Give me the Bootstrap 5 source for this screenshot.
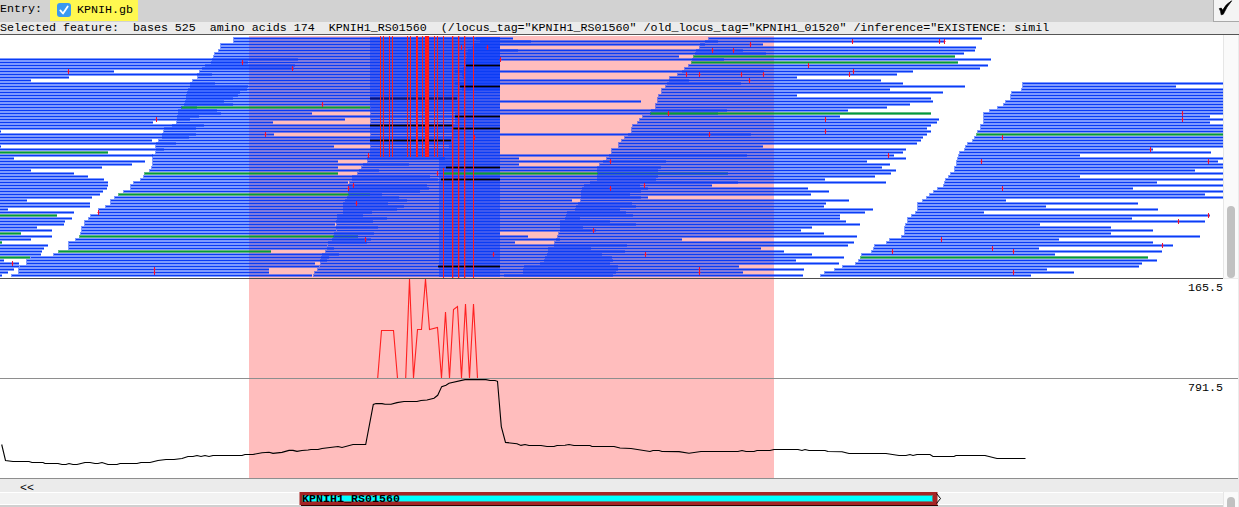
<!DOCTYPE html>
<html lang="en">
<head>
<meta charset="utf-8">
<meta name="viewport" content="width=device-width, initial-scale=1">
<title>KPNIH.gb</title>
<link rel="stylesheet" href="https://cdn.jsdelivr.net/npm/bootstrap@5.3.0/dist/css/bootstrap.min.css">
<style>
  body { font: 11.67px/12px "Liberation Mono", "Courier New", monospace; color: #000; background: #ebebeb; height: 507px; }
  svg { display: block; flex: none; }
  .entry-bar { height: 22px; background: #d2d2d2; }
  .entry-name { background: #fff850; width: 88px; height: 21px; padding-left: 7px; }
  .tick-box { width: 14px; height: 14px; border-radius: 3px; background: #3a99f0; margin-top: 3px; margin-right: 6px; }
  .apply-btn { width: 26px; height: 22px; background: #f4f4f4; border: 1px solid #a9a9a9; border-top: 0; border-right: 0; }
  .info-bar { height: 13px; background: #ebebeb; border-bottom: 1px solid #555; line-height: 12px; white-space: pre; }
  .stack-pane { height: 243px; background: #fff; }
  .plot-pane { width: 1238px; height: 100px; background: #fff; border-bottom: 1px solid #8e8e8e; }
  .selection { background-image: linear-gradient(90deg, transparent 249px, #ffbdbd 249px, #ffbdbd 774px, transparent 774px); }
  .scroll-track { width: 15px; background: #fafafa; border-left: 1px solid #e6e6e6; }
  .scroll-thumb { width: 8px; margin-left: 3px; background: #c1c1c1; border-radius: 4px; }
  .rule-row { height: 1px; width: 1223px; background: #4d4d4d; }
  .max-value { right: 15px; top: 3px; }
  .strand-bar { height: 13px; padding: 3px 0 0 20px; }
  .frame-line { height: 15px; width: 1223px; background: linear-gradient(#fff 1px, #f2f2f2 1px, #f2f2f2 12px, #fff 12px, #fff 13px, #d0d0d0 13px); }
</style>
</head>
<body class="overflow-hidden m-0">
<header class="entry-bar d-flex">
  <span style="width:50px;padding-top:3px">Entry:</span>
  <div class="entry-name d-flex">
    <span class="tick-box"><svg width="14" height="14"><path d="M3.3 7.4 6 10.5 10.7 3.4" fill="none" stroke="#fff" stroke-width="1.8" stroke-linecap="round" stroke-linejoin="round"/></svg></span><span style="padding-top:4px">KPNIH.gb</span>
  </div>
  <div class="apply-btn ms-auto"><svg width="25" height="21"><path d="M5.3 8.6Q7.7 6.9 8.6 10.2Q12.2 3.6 17.7 .8Q12.5 6.8 9.3 14.2L7.2 14.8Q6.9 11 5.3 8.6Z" fill="#000" stroke="#000" stroke-width=".7"/></svg></div>
</header>
<div class="info-bar overflow-hidden">Selected feature:  bases 525  amino acids 174  KPNIH1_RS01560  (/locus_tag="KPNIH1_RS01560" /old_locus_tag="KPNIH1_01520" /inference="EXISTENCE: simil</div>
<main>
  <section class="stack-pane d-flex" style="width:1238px">
    <svg id="reads" class="selection" width="1223" height="243" viewBox="0 35 1223 243" shape-rendering="crispEdges"></svg>
    <div class="scroll-track d-flex align-items-end"><div class="scroll-thumb" style="height:72px"></div></div>
  </section>
  <div class="rule-row"></div>
  <section class="plot-pane selection position-relative">
    <svg width="1223" height="99" viewBox="0 279 1223 99" fill="none" stroke="#ff2020" stroke-width="1.1">
      <polyline points="377.7,378 381.5,330.5 393.5,330.5 397.5,378"/>
      <polyline points="405.7,378 409.5,279 413.5,378 417.5,329.5 421.5,329.5 425.5,279 429.5,329.5 437.5,327.5 441.5,378 445.5,312 449.5,378 453.5,309.5 457.5,306.5 461.5,378 465.5,304 469.5,378 473.5,304 477.5,378"/>
    </svg>
    <span class="max-value position-absolute">165.5</span>
  </section>
  <section class="plot-pane selection position-relative">
    <svg width="1223" height="99" viewBox="0 379 1223 99" fill="none" stroke="#000" stroke-width="1.1">
      <polyline points="1.7,444.5 5.5,460.5 13,461.5 29,461.5 32,462.5 43,462.5 45,463.5 58,463.5 62,464.5 66,464.5 69,463.5 73,464.5 77,464.5 85,462.5 90,462.5 95,463.5 98,463.5 102,462.5 108,464.5 117,464.5 120,463.5 137,463.5 141,462.5 150,462.5 158,460.5 166,459.5 174,459.5 182,458.5 188,456.5 193,456.5 197,455.5 201,456.5 205,455.5 209,456.5 213,455.5 242,455.5 245,454.5 253,454.5 262,452.7 269,452.3 273,453.4 282,452.4 289,450.4 293,450.4 297,451.4 302,450.5 308,450 311,449.5 318,449.5 322,448.5 338,446.5 342,447.5 353,444.5 365.7,444.5 373.3,404.5 376,403.6 382,403.6 385,404.3 391,404.3 397,402.6 404,401.5 417,401.5 421,400.5 427,400 434,398.3 437.7,395.3 441.7,386.6 446,385.3 449,383.3 465,379.6 486,379.6 490,380.5 495,380.5 497.5,381.3 501.3,426.6 505.5,442.4 517,443.7 521,445.4 525,444.5 529,445.5 541,445.5 547,446.5 554,446.5 557,445.5 565,445.2 569,444.5 574,445.5 590,445.5 592,446.5 614,446.5 620,448 631,448.5 650,451.5 653,450.5 659,450.5 662,451.5 679,451.6 689,453.3 701,451.5 738,451.5 742,450.5 746,451.5 754,451.5 757,450.5 770,450.5 774,449.5 798,449.5 802,450.5 805,449.5 809,450.5 825,450.5 828,451.5 842,451.7 849,453.5 886,453.5 899,455.5 906,455.5 910,454.5 913,455.5 917,454.5 930,454.5 933,456.5 954,456.5 956,455.5 985,455.5 997,458.5 1025.5,458.5"/>
    </svg>
    <span class="max-value position-absolute">791.5</span>
  </section>
</main>
<div class="strand-bar">&lt;&lt;</div>
<footer class="d-flex overflow-hidden" style="height:15px">
  <div class="frame-line">
    <svg width="1223" height="15" viewBox="0 492 1223 15" font-family="Liberation Mono, monospace" font-size="11.67" font-weight="bold">
      <rect x="299.5" y="492" width="638" height="13" fill="#a52424"/>
      <rect x="302" y="495" width="631" height="7" fill="#5c8580"/>
      <rect x="303" y="496" width="629" height="5" fill="#0ff"/>
      <path d="M301 505.5H938" stroke="#300"/>
      <path d="M936.5 493.5 940.5 498.5 936.5 503.5" fill="none" stroke="#000"/>
      <text x="302" y="502">KPNIH1_RS01560</text>
      <text x="302" y="513.5">KPNIH1_RS01560</text>
    </svg>
  </div>
  <div class="scroll-track" style="height:15px"><div class="scroll-thumb" style="height:20px;margin-top:5px"></div></div>
</footer>
<script src="https://cdn.jsdelivr.net/npm/bootstrap@5.3.0/dist/js/bootstrap.bundle.min.js"></script>
<script>
// One entry per row of the read stack, top to bottom; 0 means no read.
const leftEnd = [0,0,0,0,0,0,0,298,248,295,294,114,212,69,31,215,248,247,240,238,233,224,233,197,217,221,199,190,153,204,196,1,196,189,152,176,1,164,108,153,14,145,132,102,31,74,88,104,108,108,107,103,100,92,27,90,90,8,74,57,72,65,64,37,52,21,52,31,2,48,44,42,41,30,4,19,19,14,8,2];
const secondStart = [233,233,220,220,218,214,213,212,211,205,202,199,197,197,192,190,190,188,187,186,186,185,184,181,178,178,177,177,176,172,164,163,162,162,158,156,155,156,155,152,152,152,152,151,149,144,143,140,133,130,130,123,118,114,110,110,105,98,98,90,88,84,84,81,81,80,79,75,68,68,68,58,53,30,26,26,19,18,18,11];
const secondEnd = {25:312,27:345,28:273,32:274,36:334,40:445,41:338,42:409,43:338,44:379,45:338,46:430,47:438,48:348,49:427,50:429,51:420,52:382,53:399,54:407,55:388,56:404,57:397,58:372,59:363,60:387,61:373,62:335,63:378,64:336,65:374,66:358,67:371,68:367,69:327,70:334,71:271,72:339,73:329,74:327,75:315,76:319,77:269,78:269,79:312};
const thirdStart = [476,480,474,472,468,466,467,466,464,466,463,455,462,463,464,455,460,462,450,448,455,448,455,455,454,455,455,455,455,453,453,452,452,452,450,450,449,448,447,444,367,367,363,361,359,357,352,352,349,348,348,348,348,347,345,343,343,343,343,337,337,336,336,336,336,334,333,332,328,327,327,325,322,321,320,320,319,317,314,313];
const thirdEnd = {0:513,1:718,2:705,4:743,5:766,6:679,7:724,11:764,14:689,15:741,21:641,24:727,25:718,32:751,39:747,40:519,41:666,42:519,43:661,44:658,45:728,46:658,47:656,48:738,49:640,50:648,51:641,52:630,53:641,54:572,55:632,56:636,57:620,58:626,59:633,60:580,61:610,62:636,63:583,64:596,65:500,66:528,67:560,68:515,69:627,70:591,71:625,72:602,73:612,74:613,75:610,76:618,77:618,78:616,79:613};
const fourthStart = [708,705,700,699,696,695,693,692,691,688,684,682,677,669,669,667,665,661,661,658,657,657,655,655,651,650,642,639,637,632,631,631,628,624,621,618,618,611,611,609,606,603,599,597,597,597,597,597,590,584,582,581,581,581,580,578,576,575,567,566,565,560,560,560,560,558,557,556,554,554,548,548,547,545,544,540,524,523,523,504];
const fourthEnd = [982,945,763,976,975,964,955,991,958,988,980,913,897,797,881,903,965,890,943,797,931,933,910,887,848,931,840,939,937,931,927,931,927,923,921,917,763,906,903,894,906,867,890,882,896,891,875,825,886,712,808,829,811,648,849,826,824,873,865,840,840,846,860,812,801,824,857,682,854,848,761,784,812,844,796,839,739,804,743,803];
const fifthStart = [0,0,0,0,0,0,0,0,0,0,0,0,0,0,0,1022,1022,1021,1011,1010,1010,1005,1003,997,989,983,983,983,983,980,980,977,976,974,972,967,965,964,959,958,957,956,956,954,954,950,948,945,944,943,937,933,929,926,922,917,917,917,915,911,907,907,905,904,904,904,901,889,886,874,873,871,861,860,858,855,842,834,824,820];
const fifthEnd = {16:1176,26:1210,28:1210,37:1153,38:1211,39:1080,41:1218,44:1195,46:1080,48:1157,50:1133,52:1205,54:1006,55:1138,56:1046,57:1158,58:984,59:1210,60:1132,61:1205,62:1040,63:1111,64:1153,65:1111,66:1200,67:1059,68:1153,69:1173,70:1039,71:1162,72:1055,73:1148,74:1157,75:1142,76:1139,77:1047,78:1074,79:1031};
const green = {l:[38,59,65,68,73], s:[23,45,52,66,71], f:[6,8,25], e:[32,73]};
const mutations = [[8,242],[10,292],[11,68],[27,156],[32,265],[58,98],[75,12],[77,154],[78,154],[2,750],[4,712],[4,733],[12,686],[12,699],[12,741],[12,763],[12,849],[14,749],[25,668],[27,825],[31,825],[32,709],[39,888],[49,644],[64,593],[72,645],[72,493],[77,699],[78,699],[1,852],[1,939],[1,944],[9,808],[11,853],[25,1182],[27,1182],[33,1002],[37,1150],[41,981],[41,1208],[50,1002],[59,1208],[61,1178],[67,941],[69,1162],[70,992],[71,892],[71,1013],[78,1013],[22,322],[3,487],[3,461],[7,500],[33,474],[39,368],[45,437],[49,353],[50,348],[55,356],[67,365],[41,610],[50,610]];
const black = [[9,466],[16,460],[26,455],[30,453],[43,446],[47,441],[76,438]];

let bands = '', cores = '';
const rect = (x, y, w, h, c) => `<rect x="${x}" y="${y}" width="${w}" height="${h}" fill="${c}"/>`;
function read(i, a, b, g) {
  if (b <= a) return;
  const y = 38 + 3 * i;
  bands += rect(a, y - 1, b - a, 3, g ? 'rgba(0,135,50,.6)' : 'rgba(0,55,255,.5)');
  const inset = a ? 1 : 0;
  cores += rect(a + inset, y, b - a - inset, 1, g ? '#009b3c' : '#0a3cf5');
}
for (let i = 0; i < 80; i++) {
  read(i, 0, leftEnd[i], green.l.includes(i));
  const stop = secondEnd[i] || (i < 18 ? (i === 1 ? 531 : i === 4 ? 518 : 500) : thirdStart[i]);
  if (green.s.includes(i)) {
    read(i, secondStart[i], Math.min(stop, 370), true);
    read(i, 370, stop, false);
  } else read(i, secondStart[i], stop, false);
  if (i < 40) read(i, 370, 500, false); else read(i, 439, 500, false);
  const tEnd = thirdEnd[i] || 500;
  if (i === 45) {
    read(i, thirdStart[i], 443, false);
    read(i, 443, tEnd, true);
  } else read(i, thirdStart[i], tEnd, false);
  read(i, fourthStart[i], fourthEnd[i], green.f.includes(i));
  if (fifthStart[i]) read(i, fifthStart[i], fifthEnd[i] || 1223, green.e.includes(i));
}
let marks = '';
const dark = (i, a, b, c) => { marks += rect(a, 37 + 3 * i, b - a, 3, 'rgba(0,0,60,.45)') + rect(a, 38 + 3 * i, b - a, 1, c); };
black.forEach(([i, x]) => dark(i, x, 500, '#000'));
dark(29, 370, 453, '#000'); dark(34, 370, 451, '#000'); dark(20, 370, 457, '#001080');
[380,383,389,392,407,410,422,434,437].forEach(x => marks += rect(x, 36, 1, 121, '#f32020'));
[416,425,427].forEach(x => marks += rect(x, 36, x === 427 ? 1 : 2, 121, '#ff1c1c'));
marks += rect(428, 36, 1, 121, '#ff1c1c') + rect(443, 36, 1, 121, '#e8202c') + rect(443, 168, 1, 110, '#f32020');
[452,458,464,473].forEach(x => marks += rect(x, 36, 1, 242, '#ff1c1c') + (x < 473 ? rect(x + 1, 36, 1, 242, 'rgba(255,30,30,.3)') : ''));
mutations.forEach(([i, x]) => marks += rect(x, 36 + 3 * i, 1, 5, '#f01030') + rect(x - 1, 38 + 3 * i, 3, 1, 'rgba(255,20,40,.5)'));
document.getElementById('reads').innerHTML = rect(0, 35, 1223, 1, '#fff') + bands + cores + marks;
</script>
</body>
</html>
